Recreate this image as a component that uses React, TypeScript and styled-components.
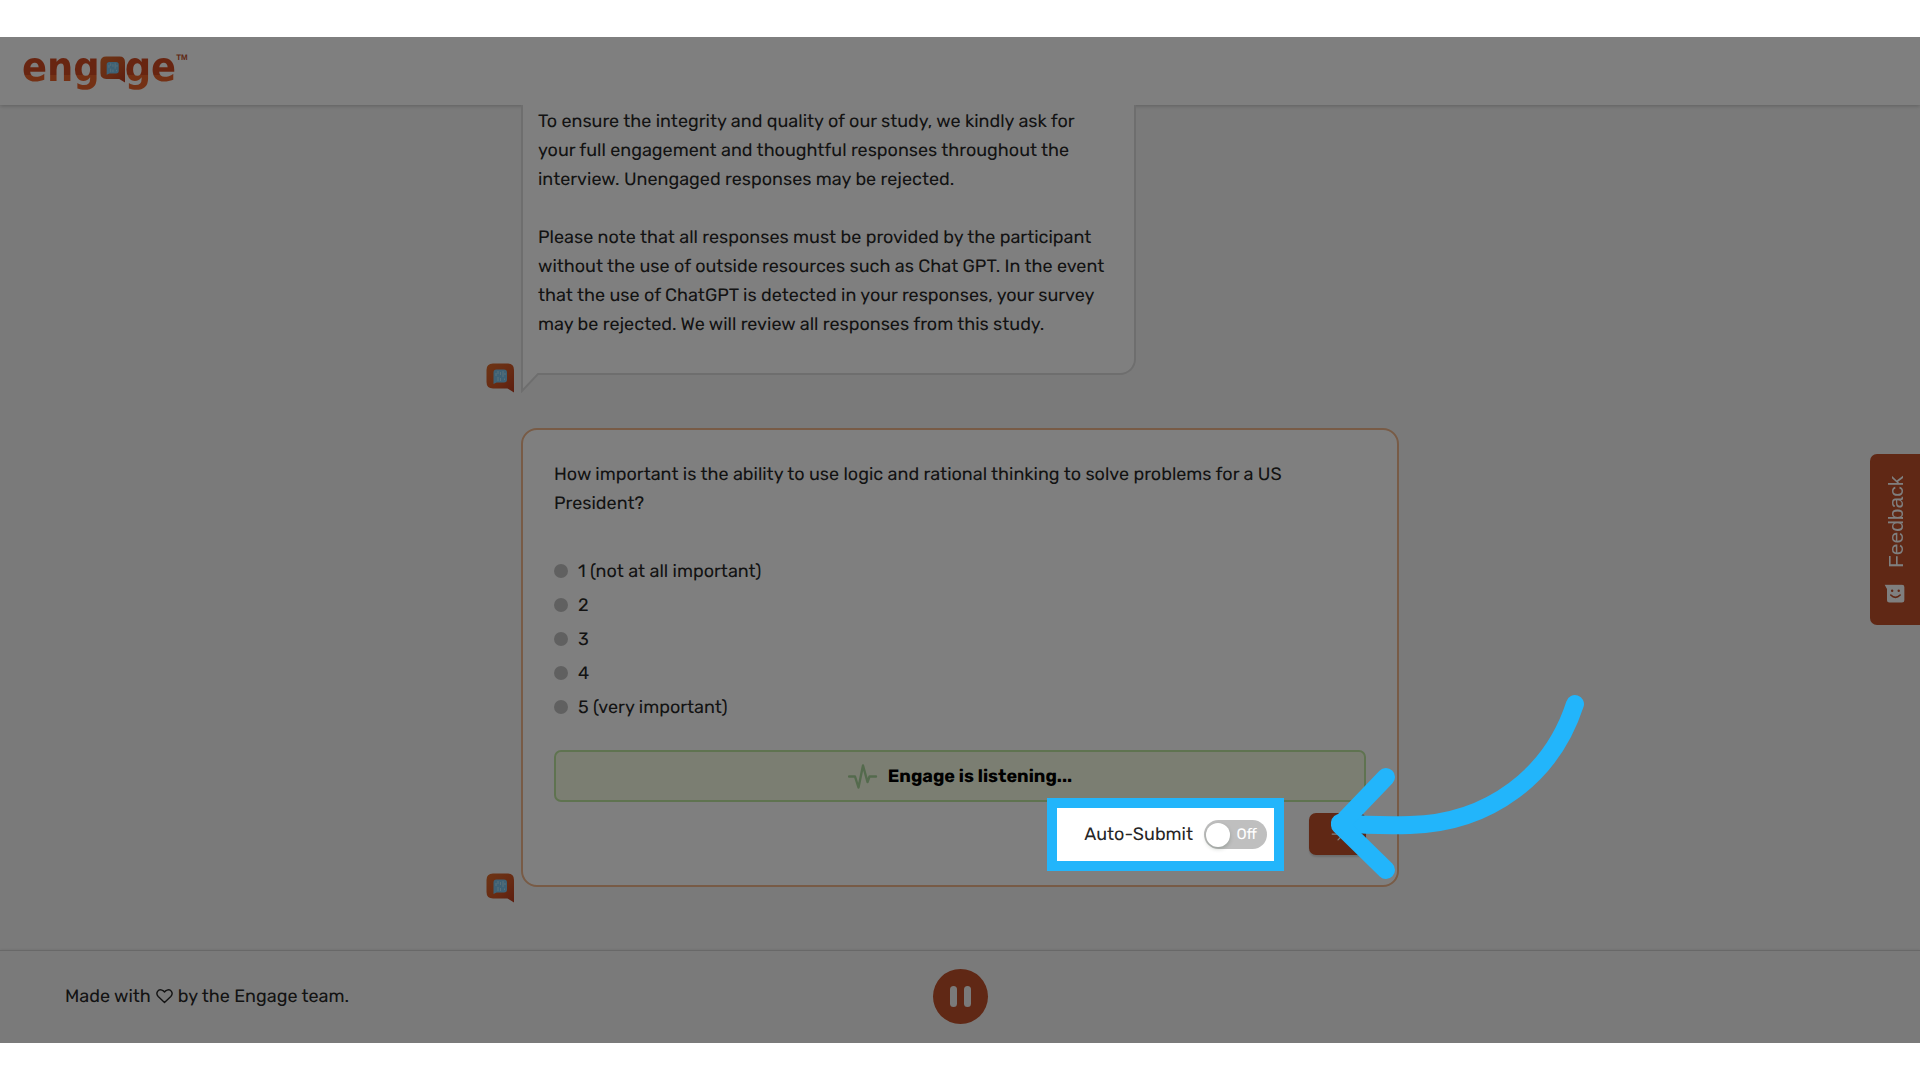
import React, { useId, useState } from "react";
import styled, { createGlobalStyle } from "styled-components";
import { ArrowRight } from "lucide-react";

const color = {
  brand: "#c0502a",
  surface: "#ffffff",
  page: "#f5f5f5",
  text: "#262626",
  line: "#dddddd",
  cardLine: "#f0b78c",
  radio: "#c1c1c1",
  listening: "#f6fde4",
  listeningLine: "#bfe6a0",
  pulse: "#a9d59a",
  callout: "#22b5fb",
};

const Global = createGlobalStyle`
  *, *::before, *::after { box-sizing: border-box; }
  body {
    margin: 0;
    background: #ffffff;
    font-family: Rubik, Roboto, "Liberation Sans", sans-serif;
    font-size: 18px;
    line-height: 29px;
    text-rendering: geometricPrecision;
    color: ${color.text};
  }
  button, input { font: inherit; }
`;

const Page = styled.div`
  display: flex;
  flex-direction: column;
  min-height: 100vh;
  padding: 37px 0;
`;

const Stage = styled.div`
  position: relative;
  display: flex;
  flex: 1;
  flex-direction: column;
  overflow: hidden;
  background: ${color.page};
`;

const Header = styled.header`
  display: flex;
  align-items: flex-start;
  height: 68px;
  padding: 4px 22px;
  background: ${color.surface};
  box-shadow: 0 1px 4px rgba(0, 0, 0, 0.22);
`;

const Wordmark = styled.a`
  display: flex;
  align-items: flex-start;
  text-decoration: none;
  font-family: "DejaVu Sans Condensed", "DejaVu Sans", sans-serif;
  font-weight: 700;
  font-size: 41px;
  line-height: 52px;
  color: ${color.brand};
`;

const WordmarkText = styled.span`
  background: linear-gradient(#d14a22 0 66%, #e8622a 66%);
  background-clip: text;
  -webkit-background-clip: text;
  color: transparent;
`;

const WordmarkBubble = styled.svg`
  width: 25px;
  height: 27px;
  margin-top: 15px;
`;

const Trademark = styled.sup`
  margin-top: 10px;
  font-family: "Liberation Sans", sans-serif;
  font-size: 8px;
  line-height: 14px;
`;

const Conversation = styled.main`
  display: flex;
  flex: 1;
  flex-direction: column;
  gap: 35px;
`;

const MessageRow = styled.section`
  display: grid;
  grid-template-columns: 28px minmax(0, 878px) 28px;
  column-gap: 7px;
  justify-content: center;
  align-items: end;
`;

const AvatarIcon = styled.svg`
  width: 28px;
  height: 30px;
`;

const Bubble = styled.div`
  position: relative;
  width: 70%;
  margin-bottom: 18px;
  padding: 2px 20px 34px 15px;
  background: ${color.surface};
  border: 2px solid ${color.line};
  border-top: 0;
  border-radius: 0 0 16px 0;
`;

const Paragraph = styled.p`
  margin: 0;
  & + & { margin-top: 29px; }
`;

const Tail = styled.svg`
  position: absolute;
  top: 100%;
  left: -2px;
  width: 18px;
  height: 20px;
`;

const Card = styled.form`
  margin-bottom: 16px;
  padding: 30px 31px;
  background: ${color.surface};
  border: 2px solid ${color.cardLine};
  border-radius: 16px;
`;

const Options = styled.fieldset`
  margin: 0;
  padding: 0;
  border: 0;
`;

const Question = styled.legend`
  padding: 0;
  margin-bottom: 36px;
`;

const Option = styled.label`
  display: flex;
  align-items: center;
  gap: 10px;
  height: 34px;
`;

const Radio = styled.input`
  appearance: none;
  width: 14px;
  height: 14px;
  margin: 0;
  border-radius: 50%;
  background: ${color.radio};
  &:checked { background: ${color.brand}; }
`;

const Listening = styled.div`
  display: flex;
  align-items: center;
  justify-content: center;
  gap: 10px;
  height: 52px;
  margin-top: 26px;
  background: ${color.listening};
  border: 2px solid ${color.listeningLine};
  border-radius: 7px;
  font-weight: 700;
  color: #000000;
`;

const Pulse = styled.svg`
  width: 30px;
  height: 28px;
`;

const Actions = styled.div`
  position: relative;
  display: flex;
  align-items: center;
  justify-content: flex-end;
  gap: 42px;
  margin-top: 11px;
`;

const AutoSubmit = styled.div`
  position: relative;
  display: flex;
  align-items: center;
  gap: 11px;
`;

const Switch = styled.span`
  position: relative;
  display: flex;
  align-items: center;
  justify-content: flex-end;
  width: 63px;
  height: 29px;
  padding: 0 10px;
  border-radius: 15px;
  background: #bfbfbf;
  font-size: 15px;
  color: #ffffff;
`;

const SwitchInput = styled.input`
  position: absolute;
  inset: 0;
  width: 100%;
  height: 100%;
  margin: 0;
  appearance: none;
  &::before {
    content: "";
    position: absolute;
    top: 3px;
    left: 2px;
    width: 24px;
    height: 24px;
    border-radius: 50%;
    background: #ffffff;
    box-shadow: 0 2px 4px rgba(0, 35, 11, 0.2);
  }
  &:checked::before { left: 37px; }
`;

const Spotlight = styled.div`
  position: absolute;
  z-index: 5;
  inset: -22px -17px -22px -37px;
  border: 10px solid ${color.callout};
  box-shadow: 0 0 0 4000px rgba(0, 0, 0, 0.5);
  pointer-events: none;
`;

const Submit = styled.button`
  display: flex;
  align-items: center;
  justify-content: center;
  width: 57px;
  height: 42px;
  padding: 0;
  border: 0;
  border-radius: 7px;
  background: ${color.brand};
  box-shadow: 0 2px 2px rgba(0, 0, 0, 0.15);
  color: #ffffff;
`;

const Pointer = styled.svg`
  position: absolute;
  z-index: 6;
  top: -123px;
  right: -222px;
  width: 260px;
  height: 190px;
  pointer-events: none;
`;

const Feedback = styled.button`
  position: absolute;
  top: 417px;
  right: 0;
  display: flex;
  align-items: center;
  justify-content: flex-end;
  gap: 16px;
  width: 50px;
  height: 171px;
  padding: 22px 0;
  border: 0;
  border-radius: 0 7px 7px 0;
  background: ${color.brand};
  color: #ffffff;
  font-family: "Liberation Sans", Arial, sans-serif;
  font-size: 21px;
  writing-mode: vertical-rl;
  transform: rotate(180deg);
`;

const Smiley = styled.svg`
  width: 21px;
  height: 20px;
  transform: rotate(180deg);
`;

const Footer = styled.footer`
  display: grid;
  grid-template-columns: 1fr auto 1fr;
  align-items: center;
  height: 93px;
  padding: 0 65px 1px;
  border-top: 1px solid #d0d0d0;
  box-shadow: 0 -1px 2px rgba(0, 0, 0, 0.06);
`;

const Credit = styled.p`
  display: flex;
  align-items: center;
  gap: 5px;
  margin: 0;
`;

const PauseButton = styled.button`
  display: flex;
  align-items: center;
  justify-content: center;
  gap: 7px;
  width: 55px;
  height: 55px;
  padding: 0;
  border: 0;
  border-radius: 50%;
  background: ${color.brand};
`;

const PauseBar = styled.span`
  width: 7px;
  height: 21px;
  border-radius: 4px;
  background: #f5f5f5;
`;

function BubbleShapes({ id }: { id: string }) {
  return (
    <>
      <defs>
        <linearGradient id={id} x1="0" y1="0" x2="1" y2="1">
          <stop offset="0" stopColor="#da6a2a" />
          <stop offset="0.6" stopColor="#cf5426" />
          <stop offset="1" stopColor="#b93a1e" />
        </linearGradient>
      </defs>
      <path
        d="M7 0.5H22Q28 0.5 28 7V29.5L21.500 25.500H7Q0.500 25.500 0.500 19V7Q0.500 0.500 7 0.500Z"
        fill={`url(#${id})`}
      />
      <path
        d="M10.500 6.500H18Q21 6.500 21 9.500V16.500Q21 19.500 18 19.500H10.500L7.500 21V9.500Q7.500 6.500 10.500 6.500Z"
        fill="#7cc3ea"
      />
      <path
        d="M10 10V13M12 8V11M12 14V18M14.500 9V12M14.500 15V18M17 8V14M19 10V12M18.500 15.500V17"
        stroke="#c4e8f8"
        strokeWidth="0.800"
        fill="none"
      />
    </>
  );
}

function Avatar() {
  const id = useId();
  return (
    <AvatarIcon viewBox="0 0 28 30" role="img" aria-label="Engage">
      <BubbleShapes id={id} />
    </AvatarIcon>
  );
}

const choices = ["1 (not at all important)", "2", "3", "4", "5 (very important)"];

export default function App() {
  const [choice, setChoice] = useState("");
  const [auto, setAuto] = useState(false);
  return (
    <>
      <Global />
      <Page>
        <Stage>
          <Header>
            <Wordmark href="#" aria-label="Engage">
              <WordmarkText>eng</WordmarkText>
              <WordmarkBubble viewBox="0 0 28 30" aria-hidden="true">
                <BubbleShapes id="wordmark-bubble" />
              </WordmarkBubble>
              <WordmarkText>ge</WordmarkText>
              <Trademark>TM</Trademark>
            </Wordmark>
          </Header>

          <Conversation>
            <MessageRow>
              <Avatar />
              <Bubble>
                <Paragraph>
                  To ensure the integrity and quality of our study, we kindly ask for your full
                  engagement and thoughtful responses throughout the interview. Unengaged responses
                  may be rejected.
                </Paragraph>
                <Paragraph>
                  Please note that all responses must be provided by the participant without the
                  use of outside resources such as Chat GPT. In the event that the use of ChatGPT
                  is detected in your responses, your survey may be rejected. We will review all
                  responses from this study.
                </Paragraph>
                <Tail viewBox="0 0 18 20" aria-hidden="true">
                  <path d="M1 0V18L18 1V0Z" fill={color.surface} />
                  <path d="M1 0V18L17 1H18" fill="none" stroke={color.line} strokeWidth="2" />
                </Tail>
              </Bubble>
            </MessageRow>

            <MessageRow>
              <Avatar />
              <Card onSubmit={(e) => e.preventDefault()}>
                <Options>
                  <Question>
                    How important is the ability to use logic and rational thinking to solve
                    problems for a US President?
                  </Question>
                  {choices.map((c) => (
                    <Option key={c}>
                      <Radio
                        type="radio"
                        name="importance"
                        value={c}
                        checked={choice === c}
                        onChange={() => setChoice(c)}
                      />
                      {c}
                    </Option>
                  ))}
                </Options>
                <Listening role="status">
                  <Pulse viewBox="0 0 30 28" aria-hidden="true">
                    <path
                      d="M1 14.500H7L10.500 25.500L15 3.500L19.500 20L21.500 14.500H28"
                      fill="none"
                      stroke={color.pulse}
                      strokeWidth="2.400"
                      strokeLinecap="round"
                      strokeLinejoin="round"
                    />
                  </Pulse>
                  Engage is listening...
                </Listening>
                <Actions>
                  <AutoSubmit>
                    <label htmlFor="auto-submit">Auto-Submit</label>
                    <Switch>
                      <SwitchInput
                        id="auto-submit"
                        type="checkbox"
                        role="switch"
                        checked={auto}
                        onChange={(e) => setAuto(e.target.checked)}
                      />
                      Off
                    </Switch>
                    <Spotlight />
                  </AutoSubmit>
                  <Submit type="submit" aria-label="Submit">
                    <ArrowRight size={20} strokeWidth={1.5} />
                  </Submit>
                  <Pointer viewBox="0 0 260 190" aria-hidden="true">
                    <g
                      fill="none"
                      stroke={color.callout}
                      strokeWidth="18"
                      strokeLinecap="round"
                      strokeLinejoin="round"
                    >
                      <path d="M247 14C224 85 162 133 82 135Q47 136 12 133" />
                      <path d="M58 87L12 135L58 180" />
                    </g>
                  </Pointer>
                </Actions>
              </Card>
            </MessageRow>
          </Conversation>

          <Footer>
            <Credit>
              Made with
              <svg width="17" height="15" viewBox="0 0 17 15" role="img" aria-label="love">
                <path
                  d="M8.500 13.500L2.200 7.500C-1 4 2.500 -0.500 6 1.200Q7.500 1.800 8.500 3Q9.500 1.800 11 1.200C14.500 -0.500 18 4 14.800 7.500Z"
                  fill="none"
                  stroke={color.text}
                  strokeWidth="1.400"
                  strokeLinejoin="round"
                />
              </svg>
              by the Engage team.
            </Credit>
            <PauseButton type="button" aria-label="Pause">
              <PauseBar />
              <PauseBar />
            </PauseButton>
          </Footer>

          <Feedback type="button">
            <Smiley viewBox="0 0 21 20" aria-hidden="true">
              <path d="M0 0.500H18.500Q21 0.500 21 3V17Q21 19.500 18.500 19.500H5Q2.500 19.500 2.500 17V5Z" fill="#ffffff" />
              <path d="M6.500 11.500Q11.500 16.500 16.500 11.500" fill="none" stroke={color.brand} strokeWidth="1.800" strokeLinecap="round" />
              <circle cx="8" cy="7" r="1.300" fill={color.brand} />
              <circle cx="15" cy="7" r="1.300" fill={color.brand} />
            </Smiley>
            Feedback
          </Feedback>
        </Stage>
      </Page>
    </>
  );
}
